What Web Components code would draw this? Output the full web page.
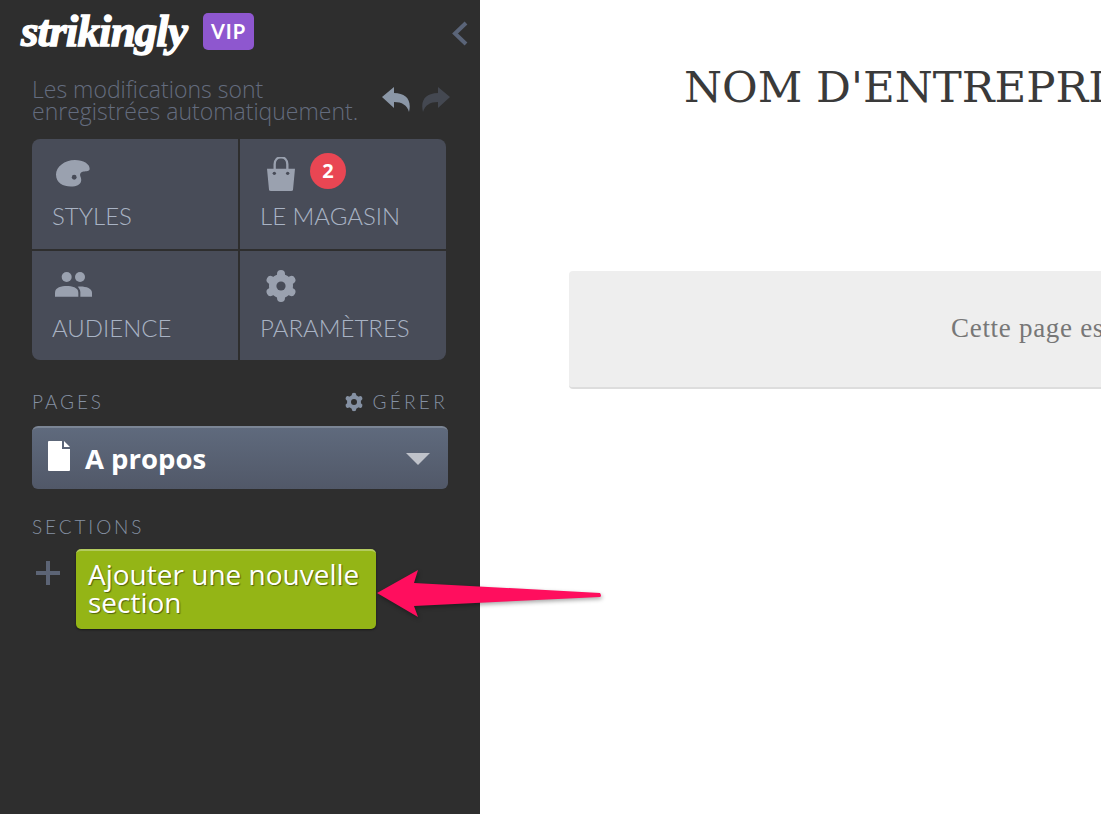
<!DOCTYPE html>
<html lang="fr"><head><meta charset="utf-8"><title>Strikingly</title>
<style>html,body{margin:0;padding:0;height:814px;overflow:hidden;background:#fff}</style></head>
<body>
<template id="t-tile"><style>
:host{display:flex;flex-direction:column;background:#484c58;color:#a9b3c4;font:300 24px/28px Lato,sans-serif;padding-left:20px;box-sizing:border-box;position:relative}
.i{height:50px;margin-top:17px;display:flex;align-items:flex-start}
.l{margin-top:-4px}
</style><div class="i"><slot name="icon"></slot></div><div class="l"><slot></slot></div></template>

<template id="t-editor"><style>
:host{display:flex;width:1101px;height:814px;overflow:hidden;position:relative}
</style><slot></slot></template>

<template id="t-side"><style>
:host{display:block;width:480px;height:814px;flex:none;background:#2e2e2e;box-sizing:border-box;padding:13px 32px 0 32px;font-family:"Open Sans",sans-serif;position:relative}
.top{display:flex;align-items:flex-start;margin-left:-11px;height:37px}
.logo{font:italic 700 45px/37px "Liberation Serif",serif;color:#fff;-webkit-text-stroke:1.4px #fff;letter-spacing:-.9px;width:182px;white-space:nowrap}
.vip{width:51px;height:37px;border-radius:5px;background:#8e57cf;color:#fff;font:700 20px/37px Lato,sans-serif;letter-spacing:1px;text-align:center}
.chev{margin-left:auto;margin-right:-20px;margin-top:8px}
.save{display:flex;height:45px;margin-top:28px;justify-content:space-between;width:418px}
.msg{font:300 23px/22px "Open Sans",sans-serif;color:#646c7e;white-space:nowrap}
.undo{display:flex;gap:12px;margin-top:9px}
.grid{display:grid;grid-template-columns:206px 206px;grid-template-rows:110px 109px;gap:2px;width:414px;border-radius:8px;overflow:hidden;margin-top:16px}
.hd{display:flex;justify-content:space-between;width:416px;font:300 19px/22px Lato,sans-serif;letter-spacing:2.9px;color:#8591a3;margin-top:31px}
.ger{display:flex;align-items:center;gap:8px;letter-spacing:3.3px}
.sel{display:flex;align-items:center;width:416px;height:63px;margin-top:13px;box-sizing:border-box;border-top:2px solid #7b8595;border-radius:6px;background:linear-gradient(#5f6a7d,#515868);color:#fff;font:700 27.5px/36px "Open Sans",sans-serif;padding-left:16px}
.sel svg{margin-top:-6px}
.sel span{margin-left:15px}
.tri{margin-left:auto;margin-right:18px;width:0;height:0;border:12px solid transparent;border-top:12px solid #bfc2ca;border-bottom:0}
.add{display:flex;align-items:flex-start;margin-top:11px}
.plus{margin:12px 16px 0 4px}
.btn{width:300px;height:80px;box-sizing:border-box;border-radius:5px;border-top:2px solid #b3cb5f;background:#94b516;color:#fff;font:400 28px/28px "Open Sans",sans-serif;padding:9px 12px 0;text-shadow:1px 1px 1px rgba(0,0,0,.45);box-shadow:0 1px 2px rgba(0,0,0,.5)}
.hs{margin-top:27px}
</style>
<div class="top"><div class="logo">strikingly</div><div class="vip">VIP</div>
<svg class="chev" width="16" height="25" viewBox="0 0 16 25"><path d="M14 2 3 12.5 14 23" fill="none" stroke="#5a6478" stroke-width="4"/></svg></div>
<div class="save"><div class="msg">Les modifications sont<br>enregistrées automatiquement.</div>
<div class="undo">
<svg width="28" height="26" viewBox="0 0 28 26"><path d="M0 10 12 0V6C24 6 30 13 27 25 25 18 20 15 12 15V21Z" fill="#8b97a7"/></svg>
<svg width="28" height="26" viewBox="0 0 28 26"><path d="M28 10 16 0V6C4 6-2 13 1 25 3 18 8 15 16 15V21Z" fill="#444851"/></svg>
</div></div>
<div class="grid"><slot name="tiles"></slot></div>
<div class="hd"><span>PAGES</span><span class="ger">
<svg width="20" height="20" viewBox="-10 -10 20 20"><g stroke="#8591a3" stroke-width="4.6" stroke-linecap="round"><path d="M0-7V7M-6.1-3.5 6.1 3.5M-6.1 3.5 6.1-3.5"/></g><circle r="7" fill="#8591a3"/><circle r="3" fill="#2e2e2e"/></svg>GÉRER</span></div>
<div class="sel"><svg width="22" height="30" viewBox="0 0 22 30"><path d="M1 0H14V8H22V29a1 1 0 0 1-1 1H1a1 1 0 0 1-1-1V1A1 1 0 0 1 1 0ZM16 0 22 6H16Z" fill="#fff"/></svg><span>A propos</span><div class="tri"></div></div>
<div class="hd hs"><span>SECTIONS</span></div>
<div class="add"><svg class="plus" width="24" height="24" viewBox="0 0 24 24"><path d="M12 0V24M0 12H24" stroke="#5c6475" stroke-width="4"/></svg>
<div class="btn">Ajouter une nouvelle section</div></div>
</template>

<template id="t-page"><style>
:host{display:block;flex:1;min-width:0;height:814px;background:#fff;overflow:hidden}
h1{margin:62px 0 0 204px;font:400 43.5px/50px "DejaVu Serif",serif;color:#3a3a3a;white-space:nowrap}
.box{margin:159px 0 0 89px;width:800px;height:118px;box-sizing:border-box;background:#eee;border-bottom:2px solid #ddd;border-radius:4px;padding:41px 0 0 382px;font:400 27px/32px "Liberation Serif",serif;letter-spacing:.7px;color:#777;white-space:nowrap}
</style><h1>NOM D'ENTREPRISE</h1><div class="box">Cette page est vide</div></template>

<template id="t-arrow"><style>
:host{display:block;position:absolute;left:370px;top:560px;width:240px;height:70px;pointer-events:none}
</style><svg width="240" height="70" viewBox="370 560 240 70" style="filter:drop-shadow(1px 2px 2px rgba(0,0,0,.35))"><path d="M377 593 418 570 414 583 600 593Q602 596 600 597L414 606 418 617Z" fill="#ff0e5e"/></svg></template>

<x-editor>
<x-side>
<x-tile slot="tiles"><svg slot="icon" width="34" height="27" viewBox="0 0 99 78" style="margin-left:4px;margin-top:4px"><path d="M55 0C80 0 98 12 98 25 98 33 88 32 80 33 70 35 68 42 72 50 76 62 72 72 55 76 30 80 0 72 0 42 0 20 25 0 55 0Z" fill="#9aa1af"/><circle cx="53" cy="50" r="7" fill="#484c58"/></svg>STYLES</x-tile>
<x-tile slot="tiles"><svg slot="icon" width="28" height="34" viewBox="0 0 84 102" style="margin-left:7px;margin-top:1px"><path d="M24 36V22C24-6 62-6 62 22V36" fill="none" stroke="#9aa1af" stroke-width="7" transform="translate(-1 0)"/><path d="M0 35H84L78 98Q78 102 72 102H12Q6 102 6 98Z" fill="#9aa1af"/><circle cx="22" cy="49" r="5" fill="#484c58"/><circle cx="62" cy="49" r="5" fill="#484c58"/></svg><x-badge>2</x-badge>LE MAGASIN</x-tile>
<x-tile slot="tiles"><svg slot="icon" width="37" height="25" viewBox="0 0 111 75" style="margin-left:3px;margin-top:4px"><circle cx="35" cy="15" r="15" fill="#9aa1af"/><circle cx="75" cy="15" r="15" fill="#9aa1af"/><path d="M0 74V62C0 46 20 42 35 42 50 42 70 46 70 62V74Z" fill="#9aa1af"/><path d="M76 74V60C76 54 72 48 68 44 90 42 111 48 111 62V74Z" fill="#9aa1af"/></svg>AUDIENCE</x-tile>
<x-tile slot="tiles"><svg slot="icon" width="34" height="34" viewBox="-17 -17 34 34" style="margin-left:4px;margin-top:1px"><g stroke="#9aa1af" stroke-width="8" stroke-linecap="round"><path d="M0-12V12M-10.4-6 10.4 6M-10.4 6 10.4-6"/></g><circle r="12" fill="#9aa1af"/><circle r="4.6" fill="#484c58"/></svg>PARAMÈTRES</x-tile>
</x-side>
<x-page></x-page>
<x-arrow></x-arrow>
</x-editor>
<script>
function reg(name,tid){customElements.define(name,class extends HTMLElement{constructor(){super();this.attachShadow({mode:'open'}).appendChild(document.getElementById(tid).content.cloneNode(true));}});}
customElements.define('x-badge',class extends HTMLElement{constructor(){super();this.attachShadow({mode:'open'}).innerHTML='<style>:host{position:absolute;left:70px;top:14px;width:36px;height:36px;border-radius:50%;background:#e94653;color:#fff;font:700 20px/36px "Open Sans",sans-serif;text-align:center}</style><slot></slot>';}});
reg('x-tile','t-tile');reg('x-editor','t-editor');reg('x-side','t-side');reg('x-page','t-page');reg('x-arrow','t-arrow');
</script>
</body></html>
